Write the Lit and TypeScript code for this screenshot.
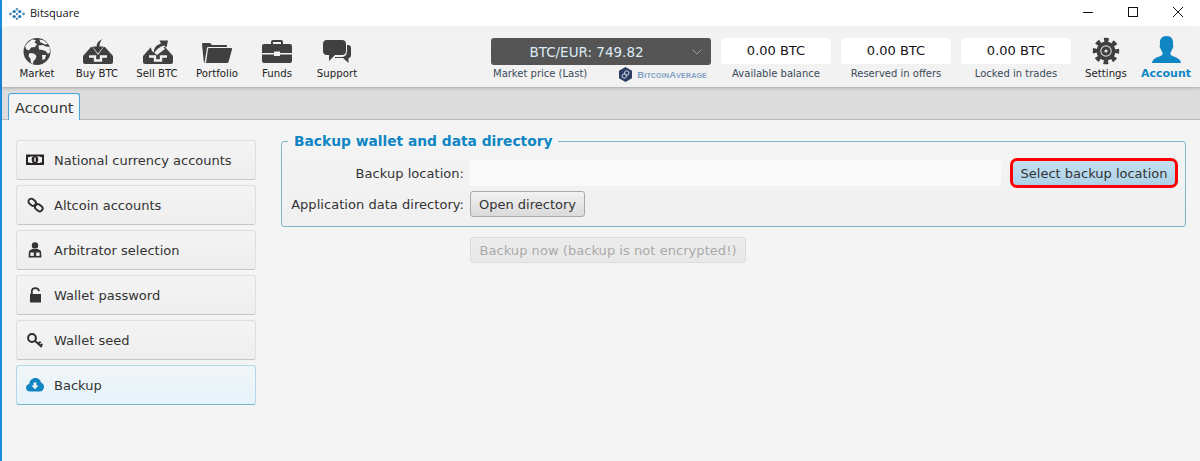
import { LitElement, html, css, svg } from "lit";
import { customElement } from "lit/decorators.js";

const DARK = "#404040";
const BG = "#f2f2f2";

const navIcon = (content: unknown) =>
  html`<svg class="nav-svg" viewBox="0 0 32 30" width="32" height="30">${content}</svg>`;

const globe = svg`
  <circle cx="16" cy="15.5" r="13.5" fill="${DARK}"/>
  <path fill="${BG}" d="M11 3.4 L15 4 L13.5 6.5 L16 8 L14 11 L10 11.5 L8 14.5 L5 13 L4.2 10 L7 6.5Z"/>
  <path fill="${BG}" d="M18.5 3.5 L23 4.5 L27 8 L24 8.5 L21 7 L19 6Z"/>
  <path fill="${BG}" d="M17.5 9.5 L22 9 L25 10.5 L28.6 11 L29 16 L27 18 L24.5 15 L21.5 14 L18 13.5Z"/>
  <path fill="${BG}" d="M8.5 17 L13 17.5 L15.5 20 L14.5 23 L12.5 25 L12 28 L10 27 L9.5 23 L7.5 20Z"/>
  <path fill="${BG}" d="M21 19 L25 19 L24 23 L21.5 24Z"/>`;

const tray = svg`
  <path fill="${DARK}" d="M2 20 L10 11 H24 L32 20 V26 Q32 28 30 28 H4 Q2 28 2 26Z"/>
  <path fill="none" stroke="${BG}" stroke-width="2.4" d="M8 20.5 H14 V24.5 H20 V20.5 H26"/>`;

const buy = svg`${tray}
  <path fill="${BG}" d="M10 9 H24 L17 19Z"/>
  <path fill="${DARK}" d="M11.5 10.5 H15.5 Q15.5 5.5 21.5 3 Q18.5 6 18.5 10.5 H22.5 L17 17.5Z"/>`;

const sell = svg`${tray}
  <path fill="${BG}" d="M9 9 L20 8 L24 13 L16 19 L11 15Z"/>
  <path fill="${DARK}" d="M13 17 Q12 10 20 7.5 L18.5 4.5 L27 4.5 L25.5 11.5 L23 9.5 Q17 11 13 17Z"/>`;

const folder = svg`
  <path fill="${DARK}" d="M1 8 Q1 7 2 7 H9 L11 9 H25 Q26 9 26 10 V11 H7 Q6 11 6 12 L3.5 27 Q3 27 2.8 26 Z"/>
  <path fill="${DARK}" d="M8 12 H30 Q31.4 12 31 13.4 L27.5 26 Q27.2 27 26 27 H5 L7 13 Q7.2 12 8 12Z"/>`;

const briefcase = svg`
  <path fill="none" stroke="${DARK}" stroke-width="2" d="M11 9 V6 Q11 5 12 5 H20 Q21 5 21 6 V9"/>
  <path fill="${DARK}" d="M3 8 H29 Q31 8 31 10 V17 H19 V15.5 H13 V17 H1 V10 Q1 8 3 8Z"/>
  <path fill="${DARK}" d="M1 18.5 H13 V20 H19 V18.5 H31 V25 Q31 27 29 27 H3 Q1 27 1 25Z"/>`;

const chat = svg`
  <path fill="${DARK}" d="M27 9 Q30 9 30 12 V19 Q30 22 27.5 22 V27 L22 22 H14 V21 H20 Q26 21 26 15 V9Z"/>
  <path fill="${DARK}" d="M6 4 H21 Q25 4 25 8 V15 Q25 19 21 19 H14 L8 25 V19 H6 Q2 19 2 15 V8 Q2 4 6 4Z"/>`;

const gear = svg`
  <circle cx="16" cy="15" r="9.5" fill="${DARK}"/>
  <circle cx="16" cy="15" r="11" fill="none" stroke="${DARK}" stroke-width="4.4" stroke-dasharray="4.6 4.04" stroke-dashoffset="2.3"/>
  <circle cx="16" cy="15" r="5.2" fill="none" stroke="#cfcfcf" stroke-width="1.2"/>
  <circle cx="16" cy="15" r="1.6" fill="#e6e6e6"/>`;

const person = svg`
  <path fill="#0f86c3" d="M16.5 0 C21.5 0 23.5 3.5 23 8 C23 9 23.5 9.5 23.2 11 C22.9 12.5 22.2 12.8 21.8 14 C21.4 15.2 20.8 16.2 20.4 17 C20.2 18.6 21 19.4 23 20.2 C27 21.6 30.5 23 31 27 H2 C2.5 23 6 21.6 10 20.2 C12 19.4 12.8 18.6 12.6 17 C12.2 16.2 11.6 15.2 11.2 14 C10.8 12.8 10.1 12.5 9.8 11 C9.5 9.5 10 9 10 8 C9.5 3.5 11.5 0 16.5 0Z"/>`;

const sideIcon = (content: unknown) =>
  html`<svg class="side-svg" viewBox="0 0 18 16" width="18" height="16">${content}</svg>`;

const money = svg`
  <path fill="#2a2424" fill-rule="evenodd" d="M0 2.5 H18 V13 H0Z M2 5 V10.5 H4 V11 H14 V10.5 H16 V5 H14 V4.5 H4 V5Z"/>
  <ellipse cx="9" cy="7.7" rx="3.3" ry="3.7" fill="#2a2424"/>
  <rect x="8.3" y="5.6" width="1.4" height="4.2" fill="#f2f2f2"/>`;

const chain = svg`
  <g fill="none" stroke="#2d2d2d" stroke-width="1.9">
    <rect x="2.2" y="2.4" width="8" height="5.6" rx="2.8" transform="rotate(38 6.2 5.2)"/>
    <rect x="8.8" y="8" width="8" height="5.6" rx="2.8" transform="rotate(38 12.8 10.8)"/>
  </g>`;

const arbitrator = svg`
  <circle cx="9" cy="3.4" r="3.2" fill="#333"/>
  <path fill="#333" d="M6 7 H12 L15 9 L15.5 15.5 H2.5 L3 9Z"/>
  <rect x="4.4" y="10.5" width="3.4" height="3.4" fill="#f2f2f2"/>
  <rect x="10.2" y="10.5" width="3.4" height="3.4" fill="#f2f2f2"/>`;

const lock = svg`
  <path fill="none" stroke="#333" stroke-width="1.8" d="M5.8 7 V4.6 Q5.8 1.2 9.4 1.2 Q12.7 1.2 13 4.2"/>
  <path fill="#333" d="M4 7 H15 V15.5 H4Z"/>`;

const key = svg`
  <circle cx="6" cy="6" r="3.9" fill="none" stroke="#2d2d2d" stroke-width="2"/>
  <path fill="none" stroke="#2d2d2d" stroke-width="1.9" d="M8.8 8.8 L15.8 15 M12.2 11.8 L14.6 9.8 M14.4 13.8 L16.4 12"/>`;

const cloud = svg`
  <path fill="#0f86c3" d="M4 14.5 C1.6 14.5 0 12.8 0 10.7 C0 8.7 1.4 7.3 3.2 7 C3.5 3.5 6 1 9.5 1 C12.3 1 14.5 2.9 15 5.6 C16.8 6.2 18 7.9 18 9.9 C18 12.5 16 14.5 13.6 14.5Z"/>
  <path fill="#f2f2f2" d="M7.6 5.5 H10.4 V8.4 H12.6 L9 12.2 L5.4 8.4 H7.6Z"/>`;

const NAV_LEFT: [string, unknown][] = [
  ["Market", globe],
  ["Buy BTC", buy],
  ["Sell BTC", sell],
  ["Portfolio", folder],
  ["Funds", briefcase],
  ["Support", chat],
];

const SIDE: [string, unknown, boolean][] = [
  ["National currency accounts", money, false],
  ["Altcoin accounts", chain, false],
  ["Arbitrator selection", arbitrator, false],
  ["Wallet password", lock, false],
  ["Wallet seed", key, false],
  ["Backup", cloud, true],
];

const BALANCES = ["Available balance", "Reserved in offers", "Locked in trades"];

@customElement("app-root")
export class AppRoot extends LitElement {
  static styles = css`
    :host {
      display: block;
      height: 461px;
      overflow: hidden;
      font-family: "DejaVu Sans", sans-serif;
      background: #f4f4f4;
    }
    .window {
      height: 461px;
      border-left: 2px solid #1a8ae0;
      display: flex;
      flex-direction: column;
      box-sizing: border-box;
    }
    .title {
      height: 27px;
      background: #fff;
      display: flex;
      align-items: center;
      flex: none;
    }
    .logo { margin-left: 7px; }
    .app-name {
      margin-left: 5px;
      margin-bottom: 3px;
      font: 11px "Open Sans", sans-serif;
      color: #111;
    }
    .controls { margin-left: auto; display: flex; }
    .ctl { width: 45px; height: 23px; display: flex; align-items: center; justify-content: center; margin-bottom: 4px; }
    .nav {
      height: 60px;
      flex: none;
      background: #f2f2f2;
      display: flex;
      align-items: flex-start;
      padding: 0 4px 0 5px;
      box-shadow: 0 1px 3px rgba(0, 0, 0, 0.25);
      position: relative;
      z-index: 1;
    }
    .nav-item {
      width: 60px;
      padding-top: 9px;
      display: flex;
      flex-direction: column;
      align-items: center;
    }
    .nav-svg { display: block; }
    .nav-label { font-size: 10.2px; line-height: 14px; margin-top: 1px; color: #222; white-space: nowrap; }
    .nav-label.active { color: #0f86c3; font-weight: 700; font-size: 11px; }
    .right {
      margin-left: auto;
      display: flex;
      align-items: flex-start;
    }
    .market { width: 220px; padding-top: 11px; margin-right: 10px; }
    .price {
      height: 27px;
      background: #555;
      border-radius: 3px;
      color: #dcecf8;
      font-size: 13.5px;
      display: flex;
      align-items: center;
      justify-content: center;
      position: relative;
      padding-right: 29px;
      box-sizing: border-box;
    }
    .caret { position: absolute; right: 9px; top: 11px; }
    .market-sub {
      margin-top: 2px;
      display: flex;
      align-items: center;
      height: 14px;
      padding-left: 2px;
    }
    .sub-label { font-size: 10px; line-height: 14px; color: #3a4a5a; white-space: nowrap; }
    .ba { margin-left: auto; display: flex; align-items: center; gap: 4px; margin-right: 4px; margin-top: 1px; }
    .ba-text {
      font: 700 9.5px "Liberation Sans", sans-serif;
      font-variant: small-caps;
      letter-spacing: 0.2px;
      color: #7d9fc4;
      white-space: nowrap;
    }
    .bal { width: 110px; padding-top: 11px; margin-right: 10px; text-align: center; }
    .bal.last { margin-right: 5px; }
    .bal-box {
      height: 26px;
      background: #fff;
      border-radius: 3px;
      font-size: 13px;
      line-height: 26px;
      color: #111;
      margin-bottom: 3px;
    }
    .tabs {
      height: 33px;
      flex: none;
      background: #dcdcdc;
      border-bottom: 1px solid #b9b9b9;
      box-sizing: border-box;
      display: flex;
      align-items: flex-end;
      padding-left: 6px;
    }
    .tab {
      height: 26px;
      box-sizing: content-box;
      background: #f4f4f4;
      border: 1px solid #4aa5dc;
      border-bottom: none;
      border-radius: 3px 3px 0 0;
      padding: 0 5px 0 6px;
      font-size: 14.5px;
      line-height: 28px;
      color: #333;
      margin-bottom: -1px;
      box-shadow: inset 0 0 0 1px #e8f2f8;
    }
    .main {
      flex: 1;
      display: flex;
      padding: 12px 14px 0 14px;
      gap: 25px;
      align-items: flex-start;
    }
    .side {
      width: 240px;
      flex: none;
      margin-top: 8px;
      display: flex;
      flex-direction: column;
      gap: 5px;
    }
    .side-btn {
      height: 40px;
      box-sizing: border-box;
      display: flex;
      align-items: center;
      gap: 10px;
      padding-left: 9px;
      border: 1px solid #dedede;
      border-bottom-color: #c6c6c6;
      border-radius: 3px;
      background: linear-gradient(#f4f4f4, #eeeeee);
      font-size: 13px;
      color: #333;
    }
    .side-btn.sel {
      border-color: #b3d8ea;
      border-bottom-color: #7ab4cf;
      background: linear-gradient(#f1f5f8, #e5f3fa);
    }
    .side-svg { display: block; flex: none; }
    .content { flex: 1; min-width: 0; }
    fieldset {
      margin: 0;
      padding: 1px 9px 9px;
      border: 1px solid #7fb4cd;
      border-radius: 3px;
      background: linear-gradient(#f4f4f4, #f0f0f0);
      min-width: 0;
    }
    legend {
      padding: 0 6px;
      margin-left: -3px;
      font-size: 13.8px;
      line-height: 18px;
      font-weight: 700;
      color: #0f86c3;
    }
    .grid {
      margin-top: 9px;
      display: grid;
      grid-template-columns: 173px 1fr 164px;
      column-gap: 6px;
      row-gap: 5px;
      align-items: center;
    }
    .lbl { font-size: 13px; letter-spacing: 0.04px; color: #333; text-align: right; white-space: nowrap; }
    .input { height: 26px; background: #fafafa; border-radius: 3px; margin-right: 5px; }
    .btn {
      height: 26px;
      box-sizing: border-box;
      border: 1px solid #a9a9a9;
      border-radius: 3px;
      background: linear-gradient(#f3f3f3, #dadada);
      font-size: 13px;
      color: #333;
      display: flex;
      align-items: center;
      justify-content: center;
      white-space: nowrap;
    }
    .btn.open { width: 115px; }
    .btn.pick {
      border: none;
      border-radius: 5px;
      background: linear-gradient(#c4dff0, #acd2e8);
      outline: 3px solid #f00;
      outline-offset: -1px;
    }
    .btn.now {
      width: 276px;
      margin: 10px 0 0 189px;
      border-color: #dcdcdc;
      background: linear-gradient(#ececec, #e8e8e8);
      color: #aaa;
      letter-spacing: 0.05px;
    }
  `;

  render() {
    return html`
      <div class="window">
        <div class="title">
          <svg class="logo" width="16" height="12" viewBox="0 0 16 12">
            <g fill="#5d8fb0">
              <circle cx="1.5" cy="6" r="1.4"/><circle cx="14.5" cy="6" r="1.4"/>
              <circle cx="8" cy="1.3" r="1.3"/><circle cx="8" cy="10.7" r="1.3"/>
            </g>
            <g fill="#1f78b4">
              <circle cx="5.2" cy="3.5" r="1.6"/><circle cx="10.8" cy="3.5" r="1.6"/>
              <circle cx="5.2" cy="8.5" r="1.6"/><circle cx="10.8" cy="8.5" r="1.6"/>
            </g>
            <circle cx="8" cy="6" r="1.2" fill="#6f8fa3"/>
          </svg>
          <span class="app-name">Bitsquare</span>
          <div class="controls">
            <div class="ctl"><svg width="10" height="10" viewBox="0 0 10 10"><path d="M0 5.5H10" stroke="#111" stroke-width="1"/></svg></div>
            <div class="ctl"><svg width="10" height="10" viewBox="0 0 10 10"><rect x=".5" y=".5" width="9" height="9" fill="none" stroke="#111"/></svg></div>
            <div class="ctl"><svg width="10" height="10" viewBox="0 0 10 10"><path d="M0 0L10 10M10 0L0 10" stroke="#111" stroke-width="1"/></svg></div>
          </div>
        </div>
        <div class="nav">
          ${NAV_LEFT.map(
            ([l, i]) => html`<div class="nav-item">${navIcon(i)}<span class="nav-label">${l}</span></div>`
          )}
          <div class="right">
            <div class="market">
              <div class="price">BTC/EUR: 749.82
                <svg class="caret" width="10" height="6" viewBox="0 0 10 6"><path d="M.5 .5L5 5L9.5 .5" fill="none" stroke="#9a9a9a"/></svg>
              </div>
              <div class="market-sub">
                <span class="sub-label">Market price (Last)</span>
                <div class="ba">
                  <svg width="15" height="15" viewBox="0 0 15 15">
                    <path d="M7.5 0L14 3.7V11.3L7.5 15L1 11.3V3.7Z" fill="#2b3d63"/>
                    <circle cx="6.3" cy="9" r="2.2" fill="none" stroke="#c9d4e4" stroke-width="1"/>
                    <circle cx="8.7" cy="6" r="2.2" fill="none" stroke="#c9d4e4" stroke-width="1"/>
                  </svg>
                  <span class="ba-text">BitcoinAverage</span>
                </div>
              </div>
            </div>
            ${BALANCES.map(
              (b, i) => html`<div class="bal ${i === BALANCES.length - 1 ? "last" : ""}"><div class="bal-box">0.00 BTC</div><div class="sub-label">${b}</div></div>`
            )}
            <div class="nav-item">${navIcon(gear)}<span class="nav-label">Settings</span></div>
            <div class="nav-item">${navIcon(person)}<span class="nav-label active">Account</span></div>
          </div>
        </div>
        <div class="tabs"><div class="tab">Account</div></div>
        <div class="main">
          <div class="side">
            ${SIDE.map(
              ([l, i, s]) => html`<div class="side-btn ${s ? "sel" : ""}">${sideIcon(i)}<span>${l}</span></div>`
            )}
          </div>
          <div class="content">
            <fieldset>
              <legend>Backup wallet and data directory</legend>
              <div class="grid">
                <div class="lbl">Backup location:</div>
                <div class="input"></div>
                <div class="btn pick">Select backup location</div>
                <div class="lbl">Application data directory:</div>
                <div class="btn open">Open directory</div>
              </div>
            </fieldset>
            <div class="btn now">Backup now (backup is not encrypted!)</div>
          </div>
        </div>
      </div>
    `;
  }
}
